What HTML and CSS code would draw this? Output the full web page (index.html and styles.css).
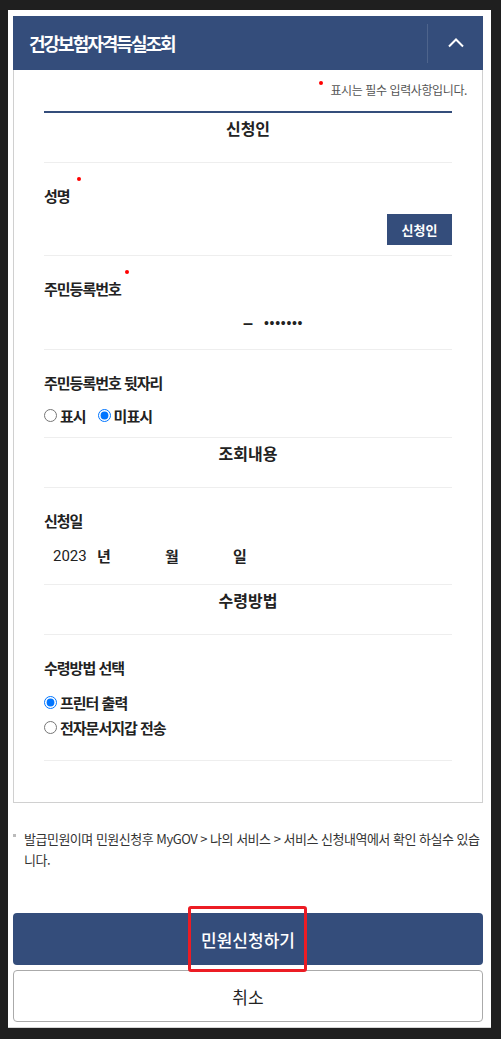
FILE: index.html
```html
<!DOCTYPE html>
<html lang="ko">
<head>
	<meta charset="UTF-8">
	<title>건강보험자격득실조회</title>
	<link rel="stylesheet" href="styles.css">
</head>
<body>
	<div class="page">
		<div class="panelHead">
			<h2 class="panelTitle">건강보험자격득실조회</h2>
			<button class="toggleBtn" type="button">
				<svg width="16" height="10" viewBox="0 0 16 10"><polyline points="1,8.5 8,1.5 15,8.5" fill="none" stroke="#fff" stroke-width="2"/></svg>
			</button>
		</div>
		<div class="panelBody">
			<p class="reqNote"><span class="reqDot"></span>표시는 필수 입력사항입니다.</p>
			<div class="formBox">
				<div class="secTitle">신청인</div>
				<div class="field">
					<div class="fieldLabel">성명<span class="req req1"></span></div>
					<button class="btnSmall" type="button">신청인</button>
				</div>
				<div class="field field2">
					<div class="fieldLabel">주민등록번호<span class="req"></span></div>
					<div class="rrnRow"><span class="rrnDash">–</span><span class="rrnMask">•••••••</span></div>
				</div>
				<div class="field field3">
					<div class="fieldLabel">주민등록번호 뒷자리</div>
					<div class="radioRow">
						<label><input type="radio" name="show">표시</label>
						<label><input type="radio" name="show" checked>미표시</label>
					</div>
				</div>
				<div class="secTitle">조회내용</div>
				<div class="field field4">
					<div class="fieldLabel">신청일</div>
					<div class="dateRow">
						<span class="yearVal">2023</span>
						<span class="unit">년</span>
						<span class="unit">월</span>
						<span class="unit">일</span>
					</div>
				</div>
				<div class="secTitle">수령방법</div>
				<div class="field field5">
					<div class="fieldLabel">수령방법 선택</div>
					<div class="radioCol">
						<label><input type="radio" name="recv" checked>프린터 출력</label>
						<label><input type="radio" name="recv">전자문서지갑 전송</label>
					</div>
				</div>
			</div>
		</div>
		<p class="notice"><span class="bullet"></span><span>발급민원이며 민원신청후 MyGOV &gt; 나의 서비스 &gt; 서비스 신청내역에서 확인 하실수 있습니다.</span></p>
		<div class="actions">
			<button class="btnApply" type="button">민원신청하기<span class="hiMark"></span></button>
			<button class="btnCancel" type="button">취소</button>
		</div>
	</div>
</body>
</html>
```
FILE: styles.css
```css
body{margin:0;background:#1f1f1f;font-family:"Noto Sans CJK KR","Noto Sans",sans-serif;color:#222;}
.page{width:483px;margin:10px 0 11px 8px;background:#fff;padding:6px 8px 5px 5px;box-sizing:border-box;border-bottom:1px solid #d6d6d6;}

.panelHead{display:flex;align-items:center;height:54px;background:#344d7b;}
.panelTitle{flex:1;margin:0;padding-left:16px;font-size:18px;font-weight:700;line-height:24px;color:#fff;letter-spacing:-2px;}
.toggleBtn{width:56px;height:39px;padding:0;border:0;border-left:1px solid rgba(255,255,255,.13);background:none;display:flex;align-items:center;justify-content:center;}

.panelBody{border:1px solid #d0d0d0;border-top:0;padding:0 30px 41px;}
.reqNote{margin:0 -15px 12px 0;padding-top:11px;text-align:right;font-size:12px;line-height:18px;color:#555;letter-spacing:-0.4px;}
.reqDot{display:inline-block;width:4px;height:4px;border-radius:50%;background:#f00;vertical-align:top;margin-right:7px;}

.formBox{border-top:2px solid #344d7b;}
.secTitle{text-align:center;font-size:16px;font-weight:700;line-height:22px;padding:4px 0 23px;border-bottom:1px solid #eee;}
.field{padding:22px 0 10px;border-bottom:1px solid #eee;}
.fieldLabel{position:relative;width:max-content;font-size:15px;font-weight:700;line-height:22px;letter-spacing:-1px;}
.req{position:absolute;right:-8px;top:-8px;width:4px;height:4px;border-radius:50%;background:#f00;}
.req1{right:-11px;}

.btnSmall{display:block;margin:7px 0 0 auto;width:65px;height:31px;padding:0;border:0;background:#344d7b;color:#fff;font-family:inherit;font-size:13px;font-weight:700;}

.field2{padding-bottom:15px;}
.rrnRow{display:flex;align-items:center;height:22px;margin-top:12px;padding-left:199px;}
.rrnDash{font-family:"Liberation Sans",sans-serif;font-size:18px;font-weight:700;width:21px;}
.rrnMask{font-family:"Liberation Sans",sans-serif;font-size:14px;letter-spacing:0.7px;}

.field3{padding-bottom:11px;}
.radioRow{display:flex;gap:12px;margin-top:10px;}
.radioRow label,.radioCol label{display:flex;align-items:center;gap:3px;height:22px;font-size:15px;font-weight:700;letter-spacing:-1px;}
.radioRow input,.radioCol input{margin:0;width:13px;height:13px;}

.field4{padding-bottom:17px;}
.dateRow{display:grid;grid-template-columns:53px 68px 68px auto;margin-top:13px;line-height:22px;font-size:15px;}
.yearVal{padding-left:9px;font-family:Roboto,sans-serif;}
.unit{font-weight:700;}

.field5{padding-bottom:22px;}
.radioCol{display:flex;flex-direction:column;gap:3px;margin-top:12px;}

.notice{display:flex;margin:25px 0 0;font-size:13px;line-height:21px;color:#333;letter-spacing:-0.5px;}
.bullet{flex:none;width:3px;height:3px;background:#bbb;margin:6px 8px 0 0;}

.actions{display:flex;flex-direction:column;gap:5px;margin-top:43px;}
.btnApply{position:relative;height:52px;border:0;border-radius:4px;background:#344d7b;color:#fff;font-family:inherit;font-size:17px;font-weight:500;}
.hiMark{position:absolute;left:175px;top:-7px;width:119px;height:66px;box-sizing:border-box;border:3px solid #ec1c24;border-radius:3px;z-index:1;}
.btnCancel{height:52px;border:1px solid #aaa;border-radius:4px;background:#fff;color:#222;font-family:inherit;font-size:17px;}
```
